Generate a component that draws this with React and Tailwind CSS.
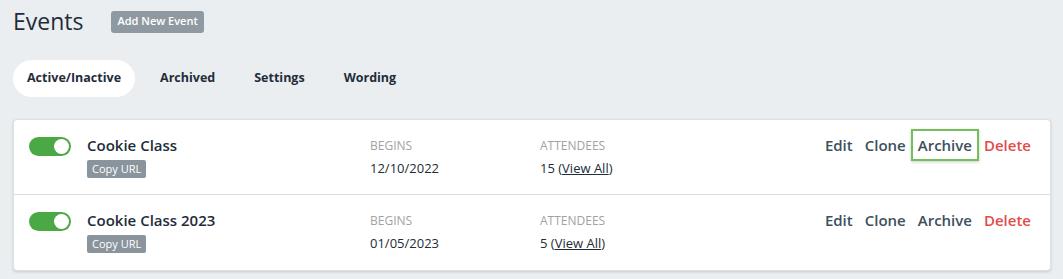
import { useState } from 'react';

const EVENTS = [
    { id: 1, name: 'Cookie Class', begins: '12/10/2022', attendees: 15, focused: true },
    { id: 2, name: 'Cookie Class 2023', begins: '01/05/2023', attendees: 5, focused: false },
];

const TABS = ['Active/Inactive', 'Archived', 'Settings', 'Wording'];

function Toggle({ on }) {
    return (
        <div className={`w-[42px] h-[19px] rounded-full flex items-center px-[2px] ${on ? 'bg-[#4aa944] justify-end' : 'bg-gray-300 justify-start'}`}>
            <div className="w-[15px] h-[15px] rounded-full bg-white" />
        </div>
    );
}

function EventRow({ event, last }) {
    const [active, setActive] = useState(true);
    return (
        <div className={`flex h-[75px] pt-[16px] ${last ? '' : 'border-b border-[#dcdfe1]'}`}>
            <div className="w-[73px] pl-[15px] pt-[1px]" onClick={() => setActive(!active)}>
                <Toggle on={active} />
            </div>
            <div className="w-[283px] flex flex-col items-start">
                <div className="text-[15px] font-semibold text-[#1f2d3a] leading-[18px]">{event.name}</div>
                <span className="mt-[6px] h-[18px] px-[5px] rounded-[2px] bg-[#8a949c] text-white text-[11px] leading-[18px]">Copy URL</span>
            </div>
            <div className="w-[170px] flex flex-col">
                <div className="text-[12px] text-[#9ea3a7] uppercase leading-[18px] mt-[1px]">Begins</div>
                <div className="text-[13px] text-[#222c35] leading-[18px] mt-[4px]">{event.begins}</div>
            </div>
            <div className="flex flex-col">
                <div className="text-[12px] text-[#9ea3a7] uppercase leading-[18px] mt-[1px]">Attendees</div>
                <div className="text-[13px] text-[#222c35] leading-[18px] mt-[4px]">
                    {event.attendees} (<span className="underline">View All</span>)
                </div>
            </div>
            <div className="ml-auto pr-[19px] mt-[-7px] flex items-center h-[32px] text-[15px] font-semibold text-[#3c5060]">
                <span className="mr-[12px]">Edit</span>
                <span className="mr-[5px]">Clone</span>
                <span className={`h-[32px] flex items-center px-[5px] border-2 ${event.focused ? 'border-[#72bf5c] shadow-[0_1px_3px_rgba(0,0,0,0.2)]' : 'border-transparent'}`}>Archive</span>
                <span className="pl-[5px] text-[#e24c4b]">Delete</span>
            </div>
        </div>
    );
}

export default function App() {
    const [tab, setTab] = useState('Active/Inactive');
    return (
        <div className="min-h-screen bg-[#ebeef0] font-['Open_Sans',sans-serif] px-[13px] pt-[10px]">
            <div className="flex items-center h-[23px]">
                <h1 className="text-[23px] text-[#1f2d3a] leading-[23px]">Events</h1>
                <button className="ml-[28px] h-[22px] px-[6px] rounded-[3px] bg-[#8f99a1] text-white text-[11px] font-semibold">Add New Event</button>
            </div>

            <div className="flex items-center mt-[27px] gap-[11px]">
                {TABS.map(t => (
                    <button
                        key={t}
                        onClick={() => setTab(t)}
                        className={`h-[37px] px-[14px] rounded-full text-[12.5px] font-bold text-[#1f2d3a] ${tab === t ? 'bg-white' : ''}`}
                    >
                        {t}
                    </button>
                ))}
            </div>

            <div className="mt-[22px] w-[1038px] bg-white rounded-[4px] shadow-[0_1px_3px_rgba(0,0,0,0.15)] border border-[#dde1e3]">
                {EVENTS.map((e, i) => (
                    <EventRow key={e.id} event={e} last={i === EVENTS.length - 1} />
                ))}
            </div>
        </div>
    );
}
